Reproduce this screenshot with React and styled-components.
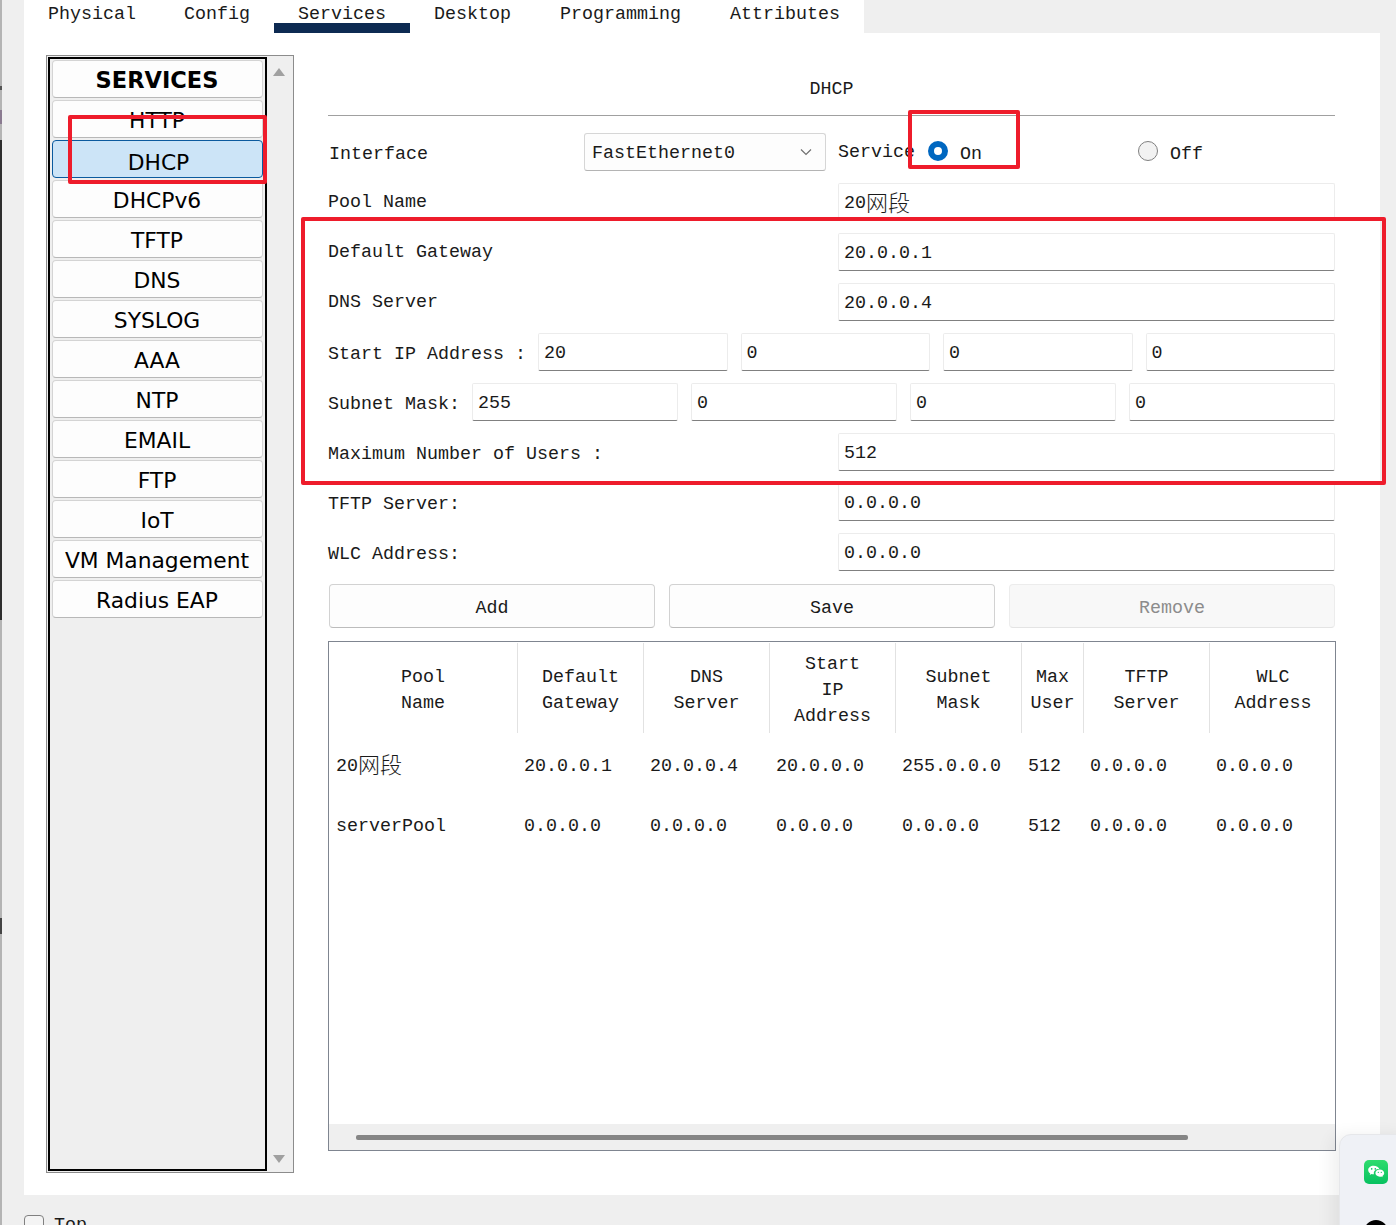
import styled, { createGlobalStyle } from "styled-components";

const GlobalStyle = createGlobalStyle`
    html, body {
        margin: 0;
        padding: 0;
        overflow: hidden;
        background: #efefef;
    }
    * {
        box-sizing: border-box;
    }
`

const mono = `"Liberation Mono", "Noto Sans CJK SC", monospace`

const services = ["HTTP", "DHCP", "DHCPv6", "TFTP", "DNS", "SYSLOG", "AAA", "NTP", "EMAIL", "FTP", "IoT", "VM Management", "Radius EAP"]
const tabs = ["Physical", "Config", "Services", "Desktop", "Programming", "Attributes"]
const columns = [
    { width: 189, head: ["Pool", "Name"] },
    { width: 126, head: ["Default", "Gateway"] },
    { width: 126, head: ["DNS", "Server"] },
    { width: 126, head: ["Start", "IP", "Address"] },
    { width: 126, head: ["Subnet", "Mask"] },
    { width: 62, head: ["Max", "User"] },
    { width: 126, head: ["TFTP", "Server"] },
    { width: 126, head: ["WLC", "Address"] },
]
const gridColumns = columns.map((c) => `${c.width}px`).join(" ")
const pools = [
    [<Cjk>20网段</Cjk>, "20.0.0.1", "20.0.0.4", "20.0.0.0", "255.0.0.0", "512", "0.0.0.0", "0.0.0.0"],
    ["serverPool", "0.0.0.0", "0.0.0.0", "0.0.0.0", "0.0.0.0", "512", "0.0.0.0", "0.0.0.0"],
]

function Cjk({ children }) {
    const text = String(children)
    return (
        <CjkWrap>
            <span>{text.slice(0, 2)}</span>
            <CjkText>{text.slice(2)}</CjkText>
        </CjkWrap>
    )
}

function WeChatIcon() {
    return (
        <svg width="24" height="24" viewBox="0 0 24 24">
            <defs>
                <linearGradient id="wechatGreen" x1="0" y1="0" x2="0" y2="1">
                    <stop offset="0" stopColor="#2fdc6e" />
                    <stop offset="1" stopColor="#07c160" />
                </linearGradient>
            </defs>
            <rect width="24" height="24" rx="5" fill="url(#wechatGreen)" />
            <path d="M9.600 5.800c-3 0-5.400 1.900-5.400 4.300 0 1.400.8 2.500 2 3.300l-.5 1.500 1.800-.9c.6.2 1.300.3 2 .3h.5c-.1-.4-.2-.7-.2-1.100 0-2.300 2.200-4.100 5-4.100h.5c-.5-1.900-2.900-3.300-5.700-3.300z" fill="#fff" />
            <path d="M20.200 13.100c0-2-2-3.600-4.400-3.600s-4.400 1.600-4.400 3.600 2 3.600 4.400 3.600c.5 0 1-.1 1.500-.2l1.400.8-.4-1.200c1.100-.7 1.900-1.800 1.900-3z" fill="#fff" />
            <circle cx="7.700" cy="8.900" r=".8" fill="#07c160" />
            <circle cx="11.300" cy="8.900" r=".8" fill="#07c160" />
            <circle cx="14.300" cy="12.300" r=".65" fill="#07c160" />
            <circle cx="17.300" cy="12.300" r=".65" fill="#07c160" />
        </svg>
    )
}

export default function App() {
    return (
        <Page>
            <GlobalStyle />
            <EdgeStrip />
            <Main>
                <TabBar>
                    {tabs.map((t) => (
                        <Tab key={t} $active={t === "Services"}>{t}</Tab>
                    ))}
                </TabBar>
                <Panel>
                    <ServiceBox>
                        <ServiceList>
                            <ServiceItem $title>SERVICES</ServiceItem>
                            {services.map((s) => (
                                <ServiceItem key={s} $active={s === "DHCP"}>{s}</ServiceItem>
                            ))}
                        </ServiceList>
                        <ListScroll>
                            <Arrow $up />
                            <Arrow />
                        </ListScroll>
                    </ServiceBox>
                    <Content>
                        <Title>DHCP</Title>
                        <Form>
                            <Row>
                                <Label $width={256} $indent={1}>Interface</Label>
                                <Select>
                                    <span>FastEthernet0</span>
                                    <Chevron width="12" height="8" viewBox="0 0 12 8" fill="none" stroke="#707070" strokeWidth="1.2">
                                        <path d="M1 1.500l5 5 5-5" />
                                    </Chevron>
                                </Select>
                                <ServiceLabel>Service</ServiceLabel>
                                <RadioOption $width={210}><Radio $checked />On</RadioOption>
                                <RadioOption><Radio />Off</RadioOption>
                            </Row>
                            <Row>
                                <Label $width={510} $high>Pool Name</Label>
                                <Field><Cjk>20网段</Cjk></Field>
                            </Row>
                            <Row>
                                <Label $width={510} $high>Default Gateway</Label>
                                <Field>20.0.0.1</Field>
                            </Row>
                            <Row>
                                <Label $width={510} $high>DNS Server</Label>
                                <Field>20.0.0.4</Field>
                            </Row>
                            <Row>
                                <Label $width={210}>Start IP Address :</Label>
                                <Octets>
                                    <Field>20</Field>
                                    <Field>0</Field>
                                    <Field>0</Field>
                                    <Field>0</Field>
                                </Octets>
                            </Row>
                            <Row>
                                <Label $width={144}>Subnet Mask:</Label>
                                <Octets>
                                    <Field>255</Field>
                                    <Field>0</Field>
                                    <Field>0</Field>
                                    <Field>0</Field>
                                </Octets>
                            </Row>
                            <Row>
                                <Label $width={510}>Maximum Number of Users :</Label>
                                <Field>512</Field>
                            </Row>
                            <Row>
                                <Label $width={510}>TFTP Server:</Label>
                                <Field>0.0.0.0</Field>
                            </Row>
                            <Row>
                                <Label $width={510}>WLC Address:</Label>
                                <Field>0.0.0.0</Field>
                            </Row>
                        </Form>
                        <Buttons>
                            <Button>Add</Button>
                            <Button>Save</Button>
                            <Button $disabled>Remove</Button>
                        </Buttons>
                        <Table>
                            <TableHead>
                                {columns.map((c) => (
                                    <HeadCell key={c.head.join()}>
                                        {c.head.map((line) => <span key={line}>{line}</span>)}
                                    </HeadCell>
                                ))}
                            </TableHead>
                            <TableBody>
                                {pools.map((row, i) => (
                                    <TableRow key={i}>
                                        {row.map((cell, j) => <Cell key={j} $first={j === 0}>{cell}</Cell>)}
                                    </TableRow>
                                ))}
                            </TableBody>
                            <TableScroll><Thumb /></TableScroll>
                        </Table>
                    </Content>
                </Panel>
                <Footer>
                    <Checkbox />
                    <span>Top</span>
                </Footer>
            </Main>

            <RedBox $left={68} $top={115} $width={199} $height={69} />
            <RedBox $left={908} $top={110} $width={112} $height={59} />
            <RedBox $left={301} $top={217} $width={1085} $height={268} />

            <FloatingDock>
                <WeChatIcon />
                <DockDot />
            </FloatingDock>
        </Page>
    )
}

const Page = styled.div`
    position: relative;
    display: flex;
    width: 1396px;
    height: 1225px;
    overflow: hidden;
    background-color: #efefef;
    color: #1a1a1a;
    font-family: ${mono};
    font-size: 18.33px;
`
const EdgeStrip = styled.div`
    width: 2px;
    height: 100%;
    background: linear-gradient(
        to bottom,
        #b4b4b4 0 86px,
        #555555 86px 90px,
        #b4b4b4 90px 110px,
        #8a7a90 110px 124px,
        #b4b4b4 124px 140px,
        #2e2e2e 140px 620px,
        #b4b4b4 620px 918px,
        #444444 918px 934px,
        #b4b4b4 934px 100%
    );
`
const Main = styled.div`
    display: flex;
    flex-direction: column;
    width: 1356px;
    margin-left: 22px;
`
const TabBar = styled.div`
    display: grid;
    flex-shrink: 0;
    grid-template-columns: 136px 114px 136px 126px 170px 158px;
    width: 840px;
    height: 33px;
    background-color: #ffffff;
`
const Tab = styled.div`
    height: 33px;
    padding-left: 24px;
    line-height: 30px;
    white-space: nowrap;
    border-bottom: 10px solid ${(p) => (p.$active ? "#0d2a52" : "transparent")};
`
const Panel = styled.div`
    display: flex;
    flex-shrink: 0;
    height: 1162px;
    padding: 22px 0 0 22px;
    background-color: #ffffff;
`
const ServiceBox = styled.div`
    display: flex;
    width: 248px;
    height: 1118px;
    padding: 1px 0 1px 1px;
    border: 1px solid #8c8c8c;
    background-color: #efefef;
`
const ServiceList = styled.div`
    display: flex;
    flex-direction: column;
    gap: 2px;
    width: 219px;
    padding: 1px 2px;
    border: 2px solid #000000;
    background-color: #efefef;
`
const ServiceItem = styled.div`
    display: flex;
    align-items: center;
    justify-content: center;
    height: 38px;
    padding-top: ${(p) => (p.$active ? "6px" : p.$title ? "2px" : "3px")};
    padding-left: ${(p) => (p.$active ? "3px" : "0")};
    padding-right: 1px;
    border: 1px solid ${(p) => (p.$active ? "#0b5a9e" : "#d4d4d4")};
    border-bottom-color: ${(p) => (p.$active ? "#0b5a9e" : "#b8b8b8")};
    border-radius: 4px;
    background-color: ${(p) => (p.$active ? "#cce4f7" : "#fdfdfd")};
    color: #000000;
    font-family: "DejaVu Sans", sans-serif;
    font-size: ${(p) => (p.$title ? "22.500px" : "21.800px")};
    font-weight: ${(p) => (p.$title ? 700 : 400)};
    white-space: nowrap;
`
const ListScroll = styled.div`
    display: flex;
    flex-direction: column;
    justify-content: space-between;
    align-items: center;
    flex: 1;
    padding: 11px 2px 8px 0;
`
const Arrow = styled.div`
    width: 0;
    height: 0;
    border-left: 6px solid transparent;
    border-right: 6px solid transparent;
    border-top: ${(p) => (p.$up ? "0" : "8px solid #a0a0a0")};
    border-bottom: ${(p) => (p.$up ? "8px solid #a0a0a0" : "0")};
`
const Content = styled.div`
    display: flex;
    flex-direction: column;
    width: 1008px;
    height: 1096px;
    margin-left: 34px;
`
const Title = styled.div`
    display: flex;
    align-items: center;
    justify-content: center;
    flex-shrink: 0;
    width: 1007px;
    height: 61px;
    padding-top: 8px;
    border-bottom: 1px solid #a0a0a0;
`
const Form = styled.div`
    display: flex;
    flex-direction: column;
    gap: 12px;
    width: 1007px;
    margin-top: 17px;
`
const Row = styled.div`
    display: flex;
    align-items: center;
    height: 38px;
`
const Label = styled.div`
    flex-shrink: 0;
    width: ${(p) => p.$width}px;
    padding-top: ${(p) => (p.$high ? "0" : "4px")};
    padding-left: ${(p) => p.$indent || 0}px;
    white-space: pre-wrap;
`
const Select = styled.div`
    display: flex;
    align-items: center;
    justify-content: space-between;
    width: 242px;
    height: 38px;
    padding: 3px 13px 0 7px;
    border: 1px solid #d6d6d6;
    border-bottom-color: #b4b4b4;
    border-radius: 3px;
    background-color: #fdfdfd;
`
const Chevron = styled.svg`
    margin-bottom: 3px;
`
const ServiceLabel = styled.div`
    width: 90px;
    margin-left: 12px;
    padding-top: 1px;
`
const RadioOption = styled.div`
    display: flex;
    align-items: center;
    gap: 12px;
    width: ${(p) => (p.$width ? `${p.$width}px` : "auto")};
    padding-top: 4px;
`
const Radio = styled.span`
    display: block;
    width: 20px;
    height: 20px;
    margin-bottom: 7px;
    border-radius: 50%;
    border: ${(p) => (p.$checked ? "6px solid #0067c0" : "1px solid #808080")};
    background-color: ${(p) => (p.$checked ? "#ffffff" : "#f2f2f2")};
`
const Field = styled.div`
    display: flex;
    align-items: center;
    flex: 1;
    min-width: 0;
    height: 38px;
    padding: 3px 0 0 5px;
    border: 1px solid #ececec;
    border-bottom-color: #808080;
    border-radius: 2px;
    background-color: #ffffff;
`
const Octets = styled.div`
    display: flex;
    flex: 1;
    gap: 13px;
`
const CjkWrap = styled.span`
    display: flex;
    align-items: center;
`
const CjkText = styled.span`
    margin-bottom: 6px;
    font-family: "Noto Sans CJK SC", sans-serif;
    font-size: 22px;
    font-weight: 300;
    line-height: 1;
`
const Buttons = styled.div`
    display: flex;
    gap: 14px;
    width: 1006px;
    margin: 13px 0 0 1px;
`
const Button = styled.div`
    display: flex;
    align-items: center;
    justify-content: center;
    flex: 1;
    height: 44px;
    padding-top: 4px;
    border: 1px solid ${(p) => (p.$disabled ? "#ececec" : "#d2d2d2")};
    border-bottom-color: ${(p) => (p.$disabled ? "#e4e4e4" : "#bcbcbc")};
    border-radius: 4px;
    background-color: ${(p) => (p.$disabled ? "#f8f8f8" : "#fdfdfd")};
    color: ${(p) => (p.$disabled ? "#8c8c8c" : "#1a1a1a")};
`
const Table = styled.div`
    display: flex;
    flex-direction: column;
    flex: 1;
    margin-top: 13px;
    border: 1px solid #7f8590;
    background-color: #ffffff;
`
const TableHead = styled.div`
    display: grid;
    grid-template-columns: ${gridColumns};
    height: 92px;
    padding-top: 1px;
`
const HeadCell = styled.div`
    display: flex;
    flex-direction: column;
    align-items: center;
    justify-content: center;
    height: 90px;
    padding-top: 6px;
    line-height: 26px;
    border-right: 1px solid #e2e2e2;
    &:last-child {
        border-right: 0;
    }
`
const TableBody = styled.div`
    flex: 1;
`
const TableRow = styled.div`
    display: grid;
    grid-template-columns: ${gridColumns};
    align-items: center;
    height: 60px;
    padding-top: 4px;
`
const Cell = styled.div`
    padding-left: ${(p) => (p.$first ? "7px" : "6px")};
    white-space: nowrap;
`
const TableScroll = styled.div`
    display: flex;
    align-items: center;
    height: 26px;
    padding-left: 27px;
    background-color: #efefef;
`
const Thumb = styled.div`
    width: 832px;
    height: 5px;
    border-radius: 2px;
    background-color: #858585;
`
const Footer = styled.div`
    display: flex;
    align-items: flex-start;
    flex-shrink: 0;
    gap: 10px;
    padding-top: 20px;
`
const Checkbox = styled.div`
    flex-shrink: 0;
    width: 20px;
    height: 20px;
    border: 1px solid #808080;
    border-radius: 4px;
    background-color: #f4f4f4;
`
const RedBox = styled.div`
    position: absolute;
    left: ${(p) => p.$left}px;
    top: ${(p) => p.$top}px;
    width: ${(p) => p.$width}px;
    height: ${(p) => p.$height}px;
    border: 4px solid #ee1c2b;
    border-radius: 2px;
`
const FloatingDock = styled.div`
    position: absolute;
    left: 1339px;
    top: 1134px;
    display: flex;
    flex-direction: column;
    align-items: center;
    flex-shrink: 0;
    gap: 36px;
    width: 74px;
    height: 120px;
    padding-top: 25px;
    border: 1px solid #e6e7ea;
    border-radius: 12px 0 0 0;
    background-color: #eff1f6;
    box-shadow: -8px 0 16px rgba(0, 0, 0, 0.06);
`
const DockDot = styled.div`
    flex-shrink: 0;
    width: 24px;
    height: 24px;
    border-radius: 50%;
    background-color: #000000;
`
